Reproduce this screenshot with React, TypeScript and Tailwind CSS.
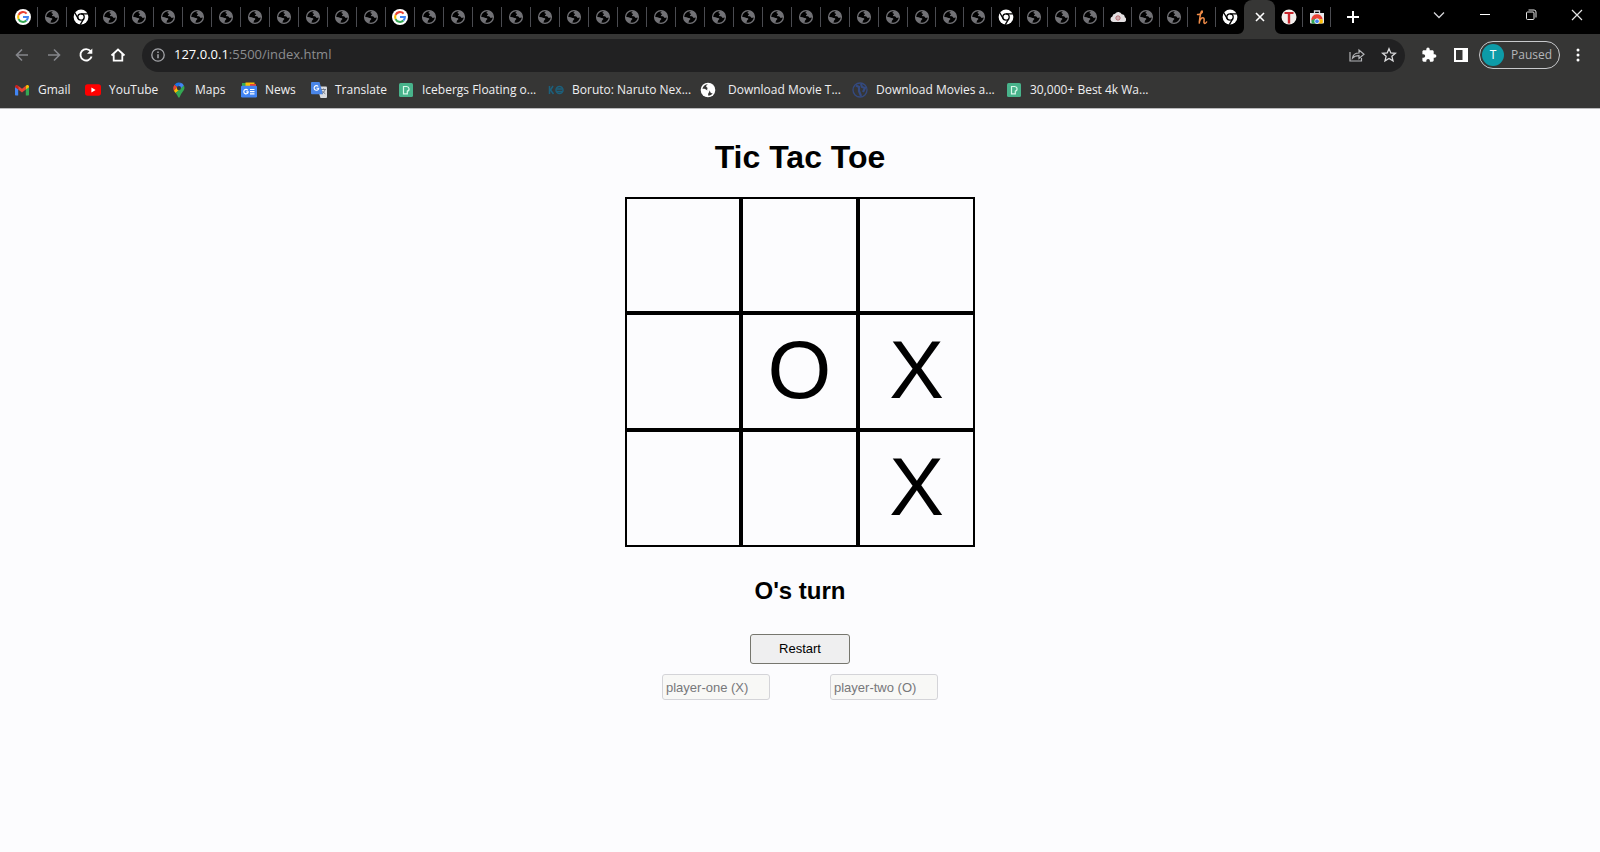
import { useState } from "react";

type IconProps = { className?: string };

function GoogleG({ className = "size-4" }: IconProps) {
  return (
    <svg viewBox="0 0 16 16" className={className} aria-hidden="true">
      <circle cx="8" cy="8" r="8" fill="#fff" />
      <g fill="none" strokeWidth="2.1">
        <path d="M11.6 4.6A4.9 4.9 0 0 0 3.6 5.9" stroke="#ea4335" />
        <path d="M3.6 5.9a4.9 4.9 0 0 0 0 4.2" stroke="#fbbc05" />
        <path d="M3.6 10.1a4.9 4.9 0 0 0 7.8 1.5" stroke="#34a853" />
        <path d="M11.4 11.6A4.9 4.9 0 0 0 12.9 8H8" stroke="#4285f4" />
      </g>
    </svg>
  );
}

function Globe({ className = "size-4 text-[#727276]" }: IconProps) {
  return (
    <svg viewBox="0 0 16 16" className={className} aria-hidden="true">
      <circle cx="8" cy="8" r="6.4" fill="none" stroke="currentColor" strokeWidth="1.3" />
      <path
        fill="currentColor"
        d="M1.6 8c1.600-.2 3.200-.1 4.300.7.700.5 1.900.2 2.300.9.500.8-.4 1.200-.9 1.600-.6.500-.300 1.700-1.200 2.600C3.400 13.200 1.400 10.800 1.600 8zM9.200 1.700c-.3.9-1.700 1.200-1.700 2 0 .9 1.400.5 1.600 1.300.2.700-1.200.9-1.200 1.600 0 .9 1.500.6 2.300 1 .8.400.9 1.300 1.700 1.300.7 0 1.200-.3 2.300-.3.500-3.500-1.600-6.300-5-6.900z"
      />
    </svg>
  );
}

function SolidGlobe({ className = "size-4" }: IconProps) {
  return (
    <svg viewBox="0 0 16 16" className={className} aria-hidden="true">
      <circle cx="8" cy="8" r="7.300" fill="#fff" />
      <path
        fill="#363635"
        d="M8 2.300C5.200 2.300 3 4.200 2.400 6.800c1.800-.4 3.700.3 4.600 1.400.5.500 1.700.2 2.200.8.500.8-.2 1.400-.7 2-.5.700-.2 1.600-.5 2.500 1.800.2 3.700-.7 4.700-2.300-1 .1-1.800 0-2.300-.9-.4-.700-.2-1.200-.9-1.500-.8-.3-2-.2-2.300-1.100-.3-.8.5-1.100.3-1.700-.3-.7-1.200-.6-1.300-1.500C6 3.500 7 2.800 8 2.300z"
      />
    </svg>
  );
}

function ChromeMark({ className = "size-4" }: IconProps) {
  return (
    <svg viewBox="0 0 16 16" className={className} aria-hidden="true">
      <circle cx="8" cy="8" r="7.400" fill="#fff" />
      <g fill="none" stroke="#000" strokeWidth="1.300">
        <circle cx="8" cy="8" r="3.200" />
        <path d="M8 4.800h7M5.200 9.600 1.800 3.700M10.800 9.600l-3.500 6" />
      </g>
    </svg>
  );
}

function Cloud() {
  return (
    <svg viewBox="0 0 16 16" className="size-4" aria-hidden="true">
      <path fill="#e4e0e2" d="M3 13a2.900 2.900 0 0 1-.6-5.600A3 3 0 0 1 5 4.700a4 4 0 0 1 6.800.6 3.200 3.200 0 0 1 3 3A2.500 2.500 0 0 1 13.300 13z" />
      <circle cx="8" cy="9" r="2.100" fill="none" stroke="#b06068" strokeWidth="1" />
      <circle cx="8" cy="9" r=".7" fill="#b06068" />
    </svg>
  );
}

function HoneyMark() {
  return (
    <svg viewBox="0 0 16 16" className="size-4" fill="none" stroke="#f08c48" strokeLinecap="round" strokeLinejoin="round" strokeWidth="1.500" aria-hidden="true">
      <path d="M3.500 5.500C5.500 6 9 4 8.300 2.200 7.500.8 6.200 4.500 5.200 14c.6-2.800 2-5.200 3.800-5.200 2.100 0 .6 3.600 1 5 .4 1 1.800.6 2.600-.8" />
    </svg>
  );
}

function TMark() {
  return (
    <svg viewBox="0 0 16 16" className="size-4" aria-hidden="true">
      <circle cx="8" cy="8" r="7.500" fill="#f3efec" />
      <path d="M3.500 3h9v2H9.200v9.500H6.800V5H3.500z" fill="#c8252c" />
    </svg>
  );
}

function StoreMark() {
  return (
    <svg viewBox="0 0 16 16" className="size-4" aria-hidden="true">
      <path d="M5.500 4V2h5v2" fill="none" stroke="#dadce0" strokeWidth="1.300" />
      <path d="M1 4h14v9.500a1 1 0 0 1-1 1H2a1 1 0 0 1-1-1z" fill="#e8eaed" />
      <path d="M2.300 11.500A5.700 5.700 0 0 1 13.700 10.500L8 9.500z" fill="#ea4335" />
      <path d="M2.300 11.500 6 9.500l2 5H2.800z" fill="#34a853" />
      <path d="M13.700 10.500a5.500 5.500 0 0 1-.5 4H8l2-4.500z" fill="#fbbc05" />
      <circle cx="8" cy="12.300" r="2.300" fill="#4285f4" stroke="#fff" strokeWidth=".8" />
    </svg>
  );
}

function GmailMark() {
  return (
    <svg viewBox="0 0 16 16" className="size-4" aria-hidden="true">
      <path d="M1 4.500v8.300c0 .4.300.7.700.7h2.500V7z" fill="#4285f4" />
      <path d="M15 4.500v8.300c0 .4-.3.700-.7.700h-2.500V7z" fill="#34a853" />
      <path d="M4.200 3.800 8 6.700l3.800-2.900V7.500L8 10.400 4.200 7.500z" fill="#ea4335" />
      <path d="M1 4.600C1 3 2.700 2.600 3.700 3.400l.5.400v3.700L1 5.200z" fill="#c5221f" />
      <path d="M15 4.600c0-1.600-1.700-2-2.700-1.200l-.5.400v3.700L15 5.200z" fill="#fbbc04" />
    </svg>
  );
}

function YouTubeMark() {
  return (
    <svg viewBox="0 0 16 16" className="size-4" aria-hidden="true">
      <rect x="0" y="2.300" width="16" height="11.400" rx="2.600" fill="#f00" />
      <path d="M6.400 5.600v4.800L10.600 8z" fill="#fff" />
    </svg>
  );
}

function MapsMark() {
  return (
    <svg viewBox="0 0 16 16" className="size-4" aria-hidden="true">
      <path d="M3.600 2.700A5.500 5.500 0 0 1 9.700.8L6.200 4.900z" fill="#1a73e8" />
      <path d="M3.600 2.700 6.200 4.900 2.900 8.800A5.500 5.500 0 0 1 3.600 2.700z" fill="#ea4335" />
      <path d="M9.700.8a5.500 5.500 0 0 1 3.200 2.700L9.700 7.300 6.300 4.900z" fill="#4285f4" />
      <path d="M6.200 4.900a2.300 2.300 0 0 0 3.500 2.900L4.500 11 2.900 8.800z" fill="#fbbc04" />
      <path d="M12.900 3.500c1.600 3.500-.6 5.500-2.300 7.800C9.300 13 9 15.700 8 15.700S6.500 12.800 4.500 11z" fill="#34a853" />
      <circle cx="8" cy="6" r="2" fill="#363635" />
    </svg>
  );
}

function NewsMark() {
  return (
    <svg viewBox="0 0 16 16" className="size-4" aria-hidden="true">
      <path d="M1 1h10v4H1z" fill="#34a853" />
      <path d="M4.500.5h9V5h-9z" fill="#fbbc04" />
      <path d="M9 2h6v3H9z" fill="#ea4335" />
      <rect x="0" y="3.800" width="16" height="11.700" rx="1.300" fill="#4285f4" />
      <path d="M6.800 8.300A2.200 2.200 0 1 0 7.200 9.900H5.200M9 7.500h4.500M9 9.700h4.500M9 11.900h4.500" fill="none" stroke="#fff" strokeWidth="1.200" />
    </svg>
  );
}

function TranslateMark() {
  return (
    <svg viewBox="0 0 16 16" className="size-4" aria-hidden="true">
      <path d="M6 4.500h9a1 1 0 0 1 1 1V15a1 1 0 0 1-1 1H9.500z" fill="#dadce0" />
      <path d="M1 0h7.500L12 12.300H1a1 1 0 0 1-1-1V1a1 1 0 0 1 1-1z" fill="#4a86e8" />
      <path d="M7.200 4.500A2.300 2.300 0 1 0 7.700 6.300H5.500" fill="none" stroke="#fff" strokeWidth="1.100" />
      <path d="M10 7.500h5M12.500 6.500v1M14 7.500c-.5 2-1.500 3-3 4M11.500 9c.7 1.200 1.500 2 2.800 2.800" fill="none" stroke="#6b7280" strokeWidth=".9" />
    </svg>
  );
}

function PexelsMark() {
  return (
    <svg viewBox="0 0 16 16" className="size-4" aria-hidden="true">
      <rect x="1" y="1" width="14" height="14" rx="1.500" fill="#48b38b" />
      <path d="M5.500 11.800V4.500h3a2.400 2.400 0 0 1 .8 4.700v2.600z" fill="none" stroke="#d8f8ea" strokeWidth="1.200" />
    </svg>
  );
}

function BorutoMark() {
  return (
    <svg viewBox="0 0 16 16" className="size-4" fill="none" stroke="#1c607c" strokeWidth="1.500" aria-hidden="true">
      <path d="M1.500 4v8M5 4 2.500 8 5.500 12" />
      <circle cx="11.500" cy="8" r="3.500" />
      <path d="M8.500 7h6M9 9.500h5" />
    </svg>
  );
}

function BlueGlobe() {
  return (
    <svg viewBox="0 0 16 16" className="size-4" fill="none" stroke="#344a80" aria-hidden="true">
      <circle cx="8" cy="8" r="7" strokeWidth="1.300" />
      <path d="M4 3.500 7 5v4l2 5M9 2l1 3 3 1-2 4" strokeWidth="2.200" />
    </svg>
  );
}

type TabIcon = "google" | "chrome" | "globe" | "cloud" | "honey";

const tabs: { title: string; icon: TabIcon }[] = Array.from({ length: 43 }, (_, i) => {
  if (i === 0 || i === 13) return { title: "Google", icon: "google" };
  if (i === 2 || i === 34 || i === 42) return { title: "Chrome", icon: "chrome" };
  if (i === 38) return { title: "Cloud", icon: "cloud" };
  if (i === 41) return { title: "Honey", icon: "honey" };
  return { title: "Site", icon: "globe" };
});

const tabIcons = {
  google: <GoogleG />,
  chrome: <ChromeMark />,
  globe: <Globe />,
  cloud: <Cloud />,
  honey: <HoneyMark />,
};

function TabStrip() {
  return (
    <div className="flex h-[34px] items-center bg-black pl-[9px] text-white">
      {tabs.map((tab, i) => (
        <button
          key={i}
          aria-label={tab.title}
          className={`flex h-5 shrink-0 items-center justify-center ${i < 31 ? "w-[29px]" : "w-7"} ${
            i < 42 ? "border-r border-[#4a4b50]" : ""
          }`}
        >
          {tabIcons[tab.icon]}
        </button>
      ))}
      <div className="relative flex h-full w-[31px] shrink-0 items-center justify-center rounded-t-lg bg-[#363635]">
        <svg viewBox="0 0 6 6" className="absolute bottom-0 -left-1.5 size-1.5" fill="#363635" aria-hidden="true">
          <path d="M6 0v6H0a6 6 0 0 0 6-6z" />
        </svg>
        <svg viewBox="0 0 6 6" className="absolute -right-1.5 bottom-0 size-1.5" fill="#363635" aria-hidden="true">
          <path d="M0 0v6h6a6 6 0 0 1-6-6z" />
        </svg>
        <button aria-label="Close tab">
          <svg viewBox="0 0 16 16" className="size-4" stroke="#fff" strokeWidth="1.600" aria-hidden="true">
            <path d="m4 4 8 8M12 4l-8 8" />
          </svg>
        </button>
      </div>
      <button aria-label="Tab" className="flex h-5 w-7 shrink-0 items-center justify-center border-r border-[#4a4b50]">
        <TMark />
      </button>
      <button aria-label="Web Store" className="flex h-5 w-7 shrink-0 items-center justify-center border-r border-[#4a4b50]">
        <StoreMark />
      </button>
      <button aria-label="New tab" className="ml-3.5 shrink-0">
        <svg viewBox="0 0 16 16" className="size-4" stroke="#fff" strokeWidth="2" aria-hidden="true">
          <path d="M8 2v12M2 8h12" />
        </svg>
      </button>
      <div className="ml-auto flex h-full shrink-0 items-center gap-[30px] pr-[15px] pb-1">
        <button aria-label="Search tabs">
          <svg viewBox="0 0 16 16" className="size-4" fill="none" stroke="#d5d5d8" strokeWidth="1.300" aria-hidden="true">
            <path d="m3 5.500 5 5 5-5" />
          </svg>
        </button>
        <button aria-label="Minimize">
          <svg viewBox="0 0 16 16" className="size-4" stroke="#fff" aria-hidden="true">
            <path d="M3 7.500h10" />
          </svg>
        </button>
        <button aria-label="Restore">
          <svg viewBox="0 0 16 16" className="size-4" fill="none" stroke="#e4e4e4" aria-hidden="true">
            <rect x="3.500" y="5" width="7.500" height="7.500" rx="1" />
            <path d="M5.500 3h5.500a2 2 0 0 1 2 2v5.500" />
          </svg>
        </button>
        <button aria-label="Close">
          <svg viewBox="0 0 16 16" className="size-4" stroke="#e4e4e4" strokeWidth="1.200" aria-hidden="true">
            <path d="m3 3 10 10M13 3 3 13" />
          </svg>
        </button>
      </div>
    </div>
  );
}

function Toolbar() {
  return (
    <div className="flex h-[42px] items-center px-3.5">
      <div className="flex items-center gap-4">
        <button aria-label="Back">
          <svg viewBox="0 0 16 16" className="size-4" fill="none" stroke="#85868b" strokeWidth="1.600" aria-hidden="true">
            <path d="M14 8H2.500M8 2.500 2.500 8 8 13.500" />
          </svg>
        </button>
        <button aria-label="Forward">
          <svg viewBox="0 0 16 16" className="size-4" fill="none" stroke="#85868b" strokeWidth="1.600" aria-hidden="true">
            <path d="M2 8h11.500M8 2.500 13.500 8 8 13.500" />
          </svg>
        </button>
        <button aria-label="Reload">
          <svg viewBox="0 0 16 16" className="size-4" fill="none" stroke="#fff" strokeWidth="1.900" aria-hidden="true">
            <path d="M12.600 4.200A5.700 5.700 0 1 0 13.600 9.500" />
            <path d="M14.300 1.500v5.300H9z" fill="#fff" stroke="none" />
          </svg>
        </button>
        <button aria-label="Home">
          <svg viewBox="0 0 16 16" className="size-4" fill="none" stroke="#fff" strokeWidth="1.800" aria-hidden="true">
            <path d="M1.500 8.500 8 2.500l6.500 6M3.700 7v6.600h8.600V7" />
          </svg>
        </button>
      </div>
      <div className="ml-4 flex h-[33px] min-w-0 flex-1 items-center rounded-full bg-[#212122] px-2">
        <svg viewBox="0 0 16 16" className="size-4 shrink-0" fill="none" stroke="#a5a6aa" aria-hidden="true">
          <circle cx="8" cy="8" r="6.200" strokeWidth="1.300" />
          <path d="M8 7.200v4M8 4.500v1.400" strokeWidth="1.500" />
        </svg>
        <a href="http://127.0.0.1:5500/index.html" className="ml-2 text-[13px] text-[#8c8d90]">
          <span className="text-white">127.0.0.1</span>:5500/index.html
        </a>
        <div className="ml-auto flex items-center gap-4">
          <button aria-label="Share">
            <svg viewBox="0 0 16 16" className="size-4" fill="none" stroke="#b4b5b8" strokeWidth="1.200" aria-hidden="true">
              <path d="M1 5v9h11.500v-3M3.500 11C4 7.500 6.500 6 10 6V3l5 4.300-5 4.200V8.700C7 8.700 5 9.300 3.500 11z" />
            </svg>
          </button>
          <button aria-label="Bookmark">
            <svg viewBox="0 0 16 16" className="size-4" fill="none" stroke="#dcdcde" strokeWidth="1.300" aria-hidden="true">
              <path d="m8 1.700 1.800 4.200 4.600.4-3.500 3 1.100 4.500L8 11.400l-4 2.400 1.100-4.500-3.500-3 4.600-.4z" />
            </svg>
          </button>
        </div>
      </div>
      <div className="ml-4 flex items-center">
        <button aria-label="Extensions">
          <svg viewBox="0 0 16 16" className="size-4" fill="#fff" aria-hidden="true">
            <path d="M13.700 7.300h-1V4.700c0-.8-.6-1.400-1.400-1.400H8.700v-1a1.700 1.700 0 0 0-3.400 0v1H2.700c-.7 0-1.300.6-1.300 1.400v2.500h1a1.800 1.800 0 0 1 0 3.600h-1v2.500c0 .8.600 1.400 1.300 1.400h2.600v-1a1.800 1.800 0 0 1 3.600 0v1h2.400c.8 0 1.400-.6 1.400-1.400v-2.600h1a1.700 1.700 0 0 0 0-3.400z" />
          </svg>
        </button>
        <button aria-label="Side panel" className="ml-4">
          <svg viewBox="0 0 16 16" className="size-4" fill="#fff" aria-hidden="true">
            <path fillRule="evenodd" d="M1 1h14v14H1zM3 3v10h6.500V3z" />
          </svg>
        </button>
        <button className="ml-2.5 flex h-7 w-[81px] items-center rounded-full border border-[#c8c9cc] pl-0.5 text-xs text-[#b4b5b8]">
          <span className="flex size-[22px] items-center justify-center rounded-full bg-[#0d9ba8] text-white">T</span>
          <span className="ml-[7px]">Paused</span>
        </button>
        <button aria-label="Menu" className="ml-2.5">
          <svg viewBox="0 0 16 16" className="size-4" fill="#fff" aria-hidden="true">
            <circle cx="8" cy="3" r="1.500" />
            <circle cx="8" cy="8" r="1.500" />
            <circle cx="8" cy="13" r="1.500" />
          </svg>
        </button>
      </div>
    </div>
  );
}

const bookmarks = [
  { label: "Gmail", icon: <GmailMark />, width: "w-[71px]", gap: "gap-2" },
  { label: "YouTube", icon: <YouTubeMark />, width: "w-[86px]", gap: "gap-2" },
  { label: "Maps", icon: <MapsMark />, width: "w-[70px]", gap: "gap-2" },
  { label: "News", icon: <NewsMark />, width: "w-[70px]", gap: "gap-2" },
  { label: "Translate", icon: <TranslateMark />, width: "w-[87px]", gap: "gap-2" },
  { label: "Icebergs Floating o...", icon: <PexelsMark />, width: "w-[150px]", gap: "gap-2" },
  { label: "Boruto: Naruto Nex...", icon: <BorutoMark />, width: "w-[152px]", gap: "gap-2" },
  { label: "Download Movie T...", icon: <SolidGlobe />, width: "w-[152px]", gap: "gap-3" },
  { label: "Download Movies a...", icon: <BlueGlobe />, width: "w-[154px]", gap: "gap-2" },
  { label: "30,000+ Best 4k Wa...", icon: <PexelsMark />, width: "w-[154px]", gap: "gap-2" },
];

function BookmarksBar() {
  return (
    <nav aria-label="Bookmarks" className="flex h-8 items-center pb-1 pl-3.5">
      {bookmarks.map((b) => (
        <a
          key={b.label}
          href="#"
          className={`flex shrink-0 items-center text-xs whitespace-nowrap text-[#efeff1] ${b.width} ${b.gap}`}
        >
          {b.icon}
          {b.label}
        </a>
      ))}
    </nav>
  );
}

function Game() {
  const [cells, setCells] = useState(["", "", "", "", "O", "X", "", "", "X"]);
  const [turn, setTurn] = useState("O");

  const play = (i: number) => {
    if (cells[i]) return;
    setCells(cells.map((c, j) => (j === i ? turn : c)));
    setTurn(turn === "O" ? "X" : "O");
  };

  const restart = () => {
    setCells(Array(9).fill(""));
    setTurn("X");
  };

  return (
    <main className="flex flex-col items-center pt-[30px] font-['Liberation_Sans',Arial,sans-serif] text-black">
      <h1 className="text-[32px] leading-9 font-bold">Tic Tac Toe</h1>
      <div className="mt-[22px] grid grid-cols-[116px_117px_117px] grid-rows-[116px_117px_117px]">
        {cells.map((c, i) => (
          <button
            key={i}
            aria-label={`Cell ${i + 1}`}
            onClick={() => play(i)}
            className="flex items-center justify-center border-2 border-black pb-1 text-[82px] leading-none"
          >
            {c}
          </button>
        ))}
      </div>
      <h2 className="mt-[30px] text-2xl leading-7 font-bold">{turn}'s turn</h2>
      <button
        onClick={restart}
        className="mt-[29px] h-[30px] w-[100px] rounded-[3px] border border-[#76766e] bg-[#efeff0] text-[13px]"
      >
        Restart
      </button>
      <div className="mt-2.5 flex gap-[60px]">
        <input
          aria-label="Player one"
          placeholder="player-one (X)"
          className="h-[26px] w-[108px] rounded-[3px] border border-[#d4d4d8] bg-[#f8f8f6] px-[3px] text-[13px] placeholder:text-[#77777a]"
        />
        <input
          aria-label="Player two"
          placeholder="player-two (O)"
          className="h-[26px] w-[108px] rounded-[3px] border border-[#d4d4d8] bg-[#f8f8f6] px-[3px] text-[13px] placeholder:text-[#77777a]"
        />
      </div>
    </main>
  );
}

export default function App() {
  return (
    <div className="min-h-screen bg-[#fcfcfe] font-['Open_Sans','Noto_Sans',sans-serif]">
      <header className="h-[109px] overflow-hidden border-b border-[#b9b9bb] bg-[#363635]">
        <TabStrip />
        <Toolbar />
        <BookmarksBar />
      </header>
      <Game />
    </div>
  );
}
